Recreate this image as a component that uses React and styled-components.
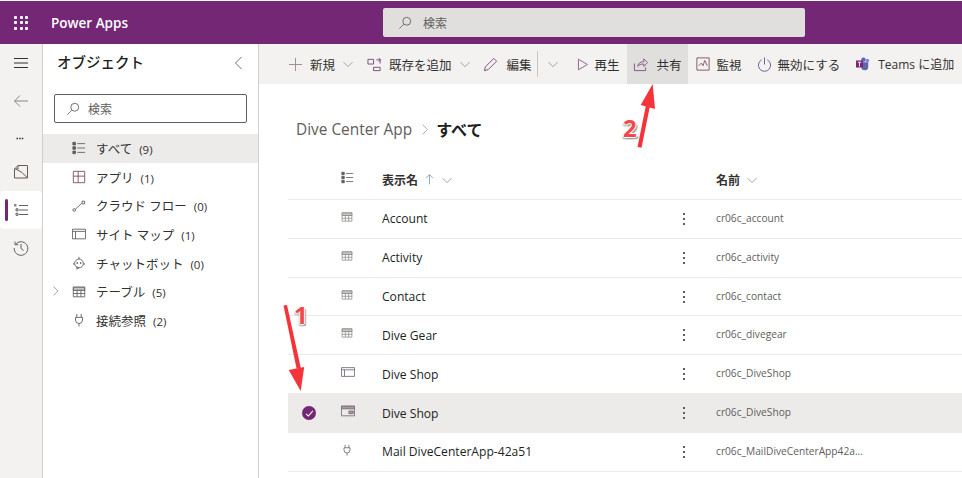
import React from 'react';
import styled, { createGlobalStyle } from 'styled-components';

const Global = createGlobalStyle`
  html, body { margin: 0; padding: 0; background: #fff; overflow: hidden; }
  body { font-family: "Open Sans", "Noto Sans CJK JP", sans-serif; color: #323130; }
`;

const PURPLE = '#742774';

const Page = styled.div`
  position: relative;
  width: 962px;
  height: 478px;
  overflow: hidden;
  padding-top: 1px;
  box-sizing: border-box;
  background: #fff;
`;

const Header = styled.header`
  height: 43px;
  background: ${PURPLE};
  display: flex;
  align-items: center;
`;
const Waffle = styled.div`
  width: 14px;
  height: 14px;
  margin-left: 14px;
  display: grid;
  grid-template-columns: repeat(3, 3px);
  grid-template-rows: repeat(3, 3px);
  gap: 2.5px;
  & > i { background: #fff; border-radius: 1px; display: block; }
`;
const Brand = styled.div`
  margin-left: 23px;
  width: 332px;
  color: #fff;
  font-size: 13.5px;
  font-weight: 600;
  font-family: "Open Sans", sans-serif;
`;
const HeaderSearch = styled.div`
  width: 422px;
  height: 29px;
  background: #e1dfdd;
  border-radius: 2px;
  display: flex;
  align-items: center;
  gap: 11px;
  padding-left: 15px;
  box-sizing: border-box;
  font-size: 12px;
  color: #605e5c;
`;

const Body = styled.div`
  display: flex;
  height: 434px;
`;

const Rail = styled.nav`
  width: 42px;
  background: #f3f2f1;
  border-right: 1px solid #d2d0ce;
  display: flex;
  flex-direction: column;
  align-items: center;
  flex: none;
`;
const RailButton = styled.div`
  width: 42px;
  height: ${p => p.$h}px;
  padding-top: ${p => p.$pt ?? 0}px;
  box-sizing: border-box;
  display: flex;
  align-items: center;
  justify-content: center;
  position: relative;
  background: ${p => (p.$active ? '#fff' : 'transparent')};
  border-radius: ${p => (p.$active ? '4px' : '0')};
  color: #323130;
`;
const RailMark = styled.span`
  position: absolute;
  left: 5px;
  top: 8px;
  width: 3px;
  height: 22px;
  border-radius: 2px;
  background: ${PURPLE};
`;

const Panel = styled.aside`
  width: 215px;
  border-right: 1px solid #d2d0ce;
  flex: none;
`;
const PanelHead = styled.div`
  height: 38px;
  display: flex;
  align-items: center;
  justify-content: space-between;
  padding: 0 12px 0 14px;
`;
const PanelTitle = styled.h2`
  margin: 0 0 3px;
  font-size: 14.5px;
  font-weight: 500;
  color: #201f1e;
  font-family: "Noto Sans CJK JP", sans-serif;
`;
const PanelSearch = styled.div`
  margin: 12px 11px 0 11px;
  height: 27px;
  border: 1px solid #605e5c;
  border-radius: 2px;
  display: flex;
  align-items: center;
  gap: 8px;
  padding-left: 11px;
  font-size: 12px;
  color: #605e5c;
`;
const NavList = styled.ul`
  list-style: none;
  margin: 11px 0 0;
  padding: 0;
`;
const NavRow = styled.li`
  height: 28.7px;
  position: relative;
  display: flex;
  align-items: center;
  padding-left: 29px;
  gap: 10px;
  font-size: 12px;
  background: ${p => (p.$selected ? '#edebe9' : 'transparent')};
`;
const NavChevron = styled.span`
  position: absolute;
  left: 8px;
  top: 9px;
  display: flex;
`;
const NavLabel = styled.span`
  font-size: 12.5px;
  color: #323130;
  & small { font-size: 11.5px; margin-left: 7px; }
`;

const Main = styled.main`
  flex: 1;
  min-width: 0;
`;
const CommandBar = styled.div`
  height: 40px;
  background: #f3f2f1;
  display: flex;
  align-items: stretch;
  padding-left: 29px;
  white-space: nowrap;
  overflow: hidden;
`;
const Cmd = styled.div`
  display: flex;
  align-items: center;
  gap: ${p => p.$gap ?? 7}px;
  margin-right: ${p => p.$mr ?? 0}px;
  padding: ${p => (p.$hot ? '0 6px' : '0')};
  background: ${p => (p.$hot ? '#e1dfdd' : 'transparent')};
  font-size: ${p => p.$size ?? 12.5}px;
  color: #323130;
`;
const CmdDivider = styled.span`
  width: 1px;
  height: 26px;
  background: #c8c6c4;
  align-self: center;
  margin: 0 9px 0 5px;
`;
const Crumbs = styled.div`
  margin: 33px 0 0 37px;
  height: 24px;
  display: flex;
  align-items: center;
  gap: 8px;
  font-size: 15.4px;
  color: #605e5c;
  & b { margin-left: -3px; color: #201f1e; font-weight: 700; font-size: 16px; font-family: "Noto Sans CJK JP", sans-serif; }
`;
const Table = styled.div`
  margin: 19px 0 0 29px;
`;
const Row = styled.div`
  height: ${p => (p.$head ? 40 : 38.83)}px;
  box-sizing: border-box;
  border-bottom: 1px solid #edebe9;
  display: grid;
  grid-template-columns: 44px 50px 298px 36px 1fr;
  align-items: center;
  background: ${p => (p.$selected ? '#edebe9' : 'transparent')};
`;
const Cell = styled.div`
  display: flex;
  align-items: center;
  gap: 6px;
`;
const IconCell = styled(Cell)`
  padding-left: 9px;
  margin-top: -4px;
`;
const HeadText = styled.span`
  font-size: 12px;
  font-weight: 700;
  color: #323130;
  margin-top: -1px;
  font-family: "Noto Sans CJK JP", sans-serif;
`;
const DisplayName = styled.span`
  font-size: 12.1px;
  color: #201f1e;
`;
const LogicalName = styled.span`
  font-size: 10.2px;
  color: #605e5c;
  margin-top: -2px;
`;
const Check = styled.span`
  width: 14px;
  height: 14px;
  border-radius: 50%;
  background: ${PURPLE};
  display: flex;
  align-items: center;
  justify-content: center;
  margin-left: 14px;
`;
const Kebab = styled.span`
  display: grid;
  gap: 3px;
  margin-left: 3px;
  & > i { width: 2px; height: 2px; background: #605e5c; display: block; }
`;

const Arrows = styled.svg`
  position: absolute;
  left: 0;
  top: 0;
  pointer-events: none;
`;
const Marker = styled.span`
  position: absolute;
  left: ${p => p.$x}px;
  top: ${p => p.$y}px;
  font: 700 24px "Open Sans", sans-serif;
  line-height: 28px;
  color: #f4474a;
  text-shadow: -1px 0 0 #fff, 0 -1px 0 #fff, 1px 0 0 #fff, 0 1px 0 #fff, 2px 2px 1px #a19f9d, -1px 2px 2px #a19f9d;
`;

const Ico = ({ size = 16, stroke = '#605e5c', sw = 1, children, ...rest }) => (
  <svg width={size} height={size} viewBox="0 0 16 16" fill="none" stroke={stroke} strokeWidth={sw} {...rest}>
    {children}
  </svg>
);
const Chevron = ({ stroke = '#8a8886' }) => (
  <Ico size={12} stroke={stroke}><path d="M2 5.500l6 6 6-6" /></Ico>
);
const Lens = () => (
  <Ico size={14} stroke="#605e5c"><circle cx="10" cy="6" r="4.500" /><path d="M6.600 9.400L1.500 14.500" stroke="#8b5a8b" /></Ico>
);
const AllIcon = ({ size = 14 }) => (
  <Ico size={size} stroke="#605e5c">
    <path d="M6 3h9M6 8h9M6 13h9" />
    <path d="M1 1.500h3v3H1zM1 6.500h3v3H1zM1 11.500h3v3H1z" fill="#605e5c" />
  </Ico>
);
const RailListIcon = () => (
  <Ico size={16} stroke="#605e5c">
    <path d="M6 3.500h9M6 8h9M6 12.500h9" />
    <path d="M1 2h2.500v2.500H1z" fill="#8a8886" stroke="none" />
    <path d="M3 6.800h2v2H3zM3 11.300h2v2H3z" />
  </Ico>
);
const AppIcon = () => <Ico size={14} stroke="#7a4a5a"><path d="M1.500 1.500h13v13h-13zM1.500 7h13M7 1.500V14.500" /></Ico>;
const FlowIcon = () => <Ico size={14}><circle cx="2.500" cy="12.500" r="1.500" /><path d="M4 11.500L11 5" /><path d="M11.500 2.500h3v3h-3z" /></Ico>;
const SiteIcon = () => <Ico size={14}><path d="M.5 2.500h15v11H.5zM.5 5h15M4 5v8.500" /></Ico>;
const BotIcon = () => (
  <Ico size={14}><circle cx="8" cy="8.500" r="5" /><path d="M8 1v2.500M2 8v2M14 8v2M6 12l-.5 3 3-2" /><circle cx="6" cy="8" r=".6" fill="#605e5c" /><circle cx="10" cy="8" r=".6" fill="#605e5c" /></Ico>
);
const TableIcon = ({ size = 14, stroke = '#605e5c' }) => (
  <Ico size={size} stroke={stroke}><path d="M1.500 2.500h13v11h-13zM1.500 6h13M1.500 9.700h13M5.800 6v7.500M10.200 6v7.500" /><path d="M1.500 2.500h13V6h-13z" fill="#c8c6c4" /></Ico>
);
const PlugIcon = ({ size = 14 }) => (
  <Ico size={size}><path d="M5.500 1v4M10.500 1v4M4 5h8v3a4 4 0 0 1-8 0zM8 12v3.500" /></Ico>
);
const ListRowIcon = () => <Ico size={14} stroke="#7a6a7a"><path d="M.5 3h15v10H.5zM.5 5.500h15M4 5.500V13" /></Ico>;
const FormRowIcon = () => <Ico size={14} stroke="#7a6a7a"><path d="M.5 2.500h15v11H.5z" /><path d="M.5 2.500h15v3H.5z" fill="#a19f9d" /><path d="M9 8h5v3H9z" fill="#a19f9d" /></Ico>;

const navItems = [
  { label: 'すべて', count: 9, icon: <AllIcon />, selected: true },
  { label: 'アプリ', count: 1, icon: <AppIcon /> },
  { label: 'クラウド フロー', count: 0, icon: <FlowIcon /> },
  { label: 'サイト マップ', count: 1, icon: <SiteIcon /> },
  { label: 'チャットボット', count: 0, icon: <BotIcon /> },
  { label: 'テーブル', count: 5, icon: <TableIcon />, expand: true },
  { label: '接続参照', count: 2, icon: <PlugIcon /> },
];

const rows = [
  { name: 'Account', logical: 'cr06c_account', icon: <TableIcon size={12} stroke="#8a8886" /> },
  { name: 'Activity', logical: 'cr06c_activity', icon: <TableIcon size={12} stroke="#8a8886" /> },
  { name: 'Contact', logical: 'cr06c_contact', icon: <TableIcon size={12} stroke="#8a8886" /> },
  { name: 'Dive Gear', logical: 'cr06c_divegear', icon: <TableIcon size={12} stroke="#8a8886" /> },
  { name: 'Dive Shop', logical: 'cr06c_DiveShop', icon: <ListRowIcon /> },
  { name: 'Dive Shop', logical: 'cr06c_DiveShop', icon: <FormRowIcon />, selected: true },
  { name: 'Mail DiveCenterApp-42a51', logical: 'cr06c_MailDiveCenterApp42a...', icon: <PlugIcon size={12} /> },
];

function App() {
  return (
    <Page>
      <Global />
      <Header>
        <Waffle>{Array.from({ length: 9 }, (_, i) => <i key={i} />)}</Waffle>
        <Brand>Power Apps</Brand>
        <HeaderSearch><Lens />検索</HeaderSearch>
      </Header>
      <Body>
        <Rail>
          <RailButton $h={38}>
            <Ico size={16} stroke="#323130"><path d="M1 3.500h14M1 8h14M1 12.500h14" /></Ico>
          </RailButton>
          <RailButton $h={37}>
            <Ico size={16} stroke="#8a8886"><path d="M15 8H1.500M7 2.500L1.500 8 7 13.500" /></Ico>
          </RailButton>
          <RailButton $h={33} $pt={9}>
            <Ico size={12} stroke="none"><path d="M2 5h2v2H2zM5.500 5h2v2h-2zM9 5h2v2H9z" fill="#323130" /></Ico>
          </RailButton>
          <RailButton $h={39}>
            <Ico size={16} stroke="#6a5a50"><path d="M5 1.500h9.500v12.500H1.500V5zM5 1.500V5H1.500M3 5l6 3.500 5.500 5.500" /></Ico>
          </RailButton>
          <RailButton $h={38} $active>
            <RailMark />
            <RailListIcon />
          </RailButton>
          <RailButton $h={38}>
            <Ico size={16} stroke="#605e5c"><path d="M2.500 4.500A6.800 6.800 0 1 1 1.200 8M2 1.500v3.200h3.200M8 4v4.500l2.500 2" /></Ico>
          </RailButton>
        </Rail>
        <Panel>
          <PanelHead>
            <PanelTitle>オブジェクト</PanelTitle>
            <Ico size={14} stroke="#605e5c"><path d="M11 1L4 8l7 7" /></Ico>
          </PanelHead>
          <PanelSearch><Lens />検索</PanelSearch>
          <NavList>
            {navItems.map(item => (
              <NavRow key={item.label} $selected={item.selected}>
                {item.expand && (
                  <NavChevron>
                    <Ico size={10} stroke="#8a5a5a"><path d="M4 1l7 7-7 7" /></Ico>
                  </NavChevron>
                )}
                {item.icon}
                <NavLabel>{item.label}<small>({item.count})</small></NavLabel>
              </NavRow>
            ))}
          </NavList>
        </Panel>
        <Main>
          <CommandBar>
            <Cmd $mr={13}>
              <Ico size={15} stroke="#a08a8a"><path d="M8 1v14M1 8h14" /></Ico>
              新規
              <Chevron />
            </Cmd>
            <Cmd $mr={12}>
              <Ico size={15} stroke="#7a4a7a"><path d="M1 2.500h6v5H1zM7 11h7v3.500H7zM10 3h4v4M12.500 1l2 2-2 2" /></Ico>
              既存を追加
              <Chevron />
            </Cmd>
            <Cmd $gap={9}>
              <Ico size={15} stroke="#7a4a7a"><path d="M1.500 14.500l1-4L11.500 1.500l3 3-9 9z" /></Ico>
              編集
            </Cmd>
            <CmdDivider />
            <Cmd $mr={17}><Chevron /></Cmd>
            <Cmd $mr={7} $gap={6}>
              <Ico size={13} stroke="#7a4a7a"><path d="M3 1.500L14 8 3 14.500z" /></Ico>
              再生
            </Cmd>
            <Cmd $hot $mr={8} $gap={9}>
              <Ico size={15} stroke="#7a5a7a"><path d="M1.500 7v7.500h12V11M5 10c.5-3.500 3-5 6.500-5V2l4 4-4 4V7.500c-3 0-5 .5-6.500 2.500z" /></Ico>
              共有
            </Cmd>
            <Cmd $mr={15}>
              <Ico size={14} stroke="#7a4a5a"><path d="M1 1h14v14H1zM3 10l3-3 2 3 2-6 3 6" /></Ico>
              監視
            </Cmd>
            <Cmd $mr={16} $gap={6}>
              <Ico size={15} stroke="#6a5a9a"><path d="M5 3a6.500 6.500 0 1 0 6 0M8 .5V8" /></Ico>
              無効にする
            </Cmd>
            <Cmd $gap={8} $size={12}>
              <svg width="14" height="14" viewBox="0 0 16 16">
                <circle cx="13" cy="4" r="2" fill="#7b83eb" />
                <circle cx="8.500" cy="3" r="2.500" fill="#5b5fc7" />
                <path d="M5 6h9v5a4 4 0 0 1-8 0z" fill="#6264a7" />
                <path d="M0 4h8v8H0z" fill="#742774" />
                <path d="M2 6h4M4 6v5" stroke="#fff" strokeWidth="1" />
              </svg>
              Teams に追加
            </Cmd>
          </CommandBar>
          <Crumbs>
            Dive Center App
            <Ico size={11} stroke="#8a8886"><path d="M4 1l7 7-7 7" /></Ico>
            <b>すべて</b>
          </Crumbs>
          <Table>
            <Row $head>
              <span />
              <IconCell><AllIcon size={13} /></IconCell>
              <Cell>
                <HeadText>表示名</HeadText>
                <Ico size={11} stroke="#5a86b0"><path d="M8 15V1M3 6l5-5 5 5" /></Ico>
                <Chevron />
              </Cell>
              <span />
              <Cell>
                <HeadText>名前</HeadText>
                <Chevron />
              </Cell>
            </Row>
            {rows.map((row, i) => (
              <Row key={i} $selected={row.selected}>
                <span>
                  {row.selected && (
                    <Check>
                      <Ico size={9} stroke="#fff" sw={2}><path d="M2 8.500l4 4 8-9" /></Ico>
                    </Check>
                  )}
                </span>
                <IconCell>{row.icon}</IconCell>
                <DisplayName>{row.name}</DisplayName>
                <Kebab><i /><i /><i /></Kebab>
                <LogicalName>{row.logical}</LogicalName>
              </Row>
            ))}
          </Table>
        </Main>
      </Body>
      <Arrows width="962" height="478">
        <path d="M283.500 305.500l3.500-.6 13.800 63-4.200.8z" fill="#f5333a" />
        <path d="M300.700 391L288.700 370l15.500-3z" fill="#f5333a" />
        <path d="M637.500 147l8.500-42 4 .8-8.500 41.900z" fill="#f5333a" />
        <path d="M652.700 84L640.700 105l14.300 4z" fill="#f5333a" />
      </Arrows>
      <Marker $x={294} $y={301}>1</Marker>
      <Marker $x={623} $y={114}>2</Marker>
    </Page>
  );
}

export default App;
